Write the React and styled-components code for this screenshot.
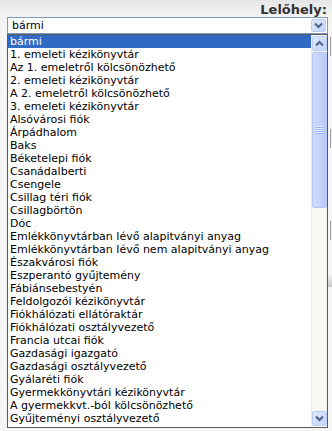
import React from 'react';
import styled, { createGlobalStyle } from 'styled-components';

// Options of the location picker, as they are listed
const LOCATIONS = [
  'bármi',
  '1. emeleti kézikönyvtár',
  'Az 1. emeletről kölcsönözhető',
  '2. emeleti kézikönyvtár',
  'A 2. emeletről kölcsönözhető',
  '3. emeleti kézikönyvtár',
  'Alsóvárosi fiók',
  'Árpádhalom',
  'Baks',
  'Béketelepi fiók',
  'Csanádalberti',
  'Csengele',
  'Csillag téri fiók',
  'Csillagbörtön',
  'Dóc',
  'Emlékkönyvtárban lévő alapitványi anyag',
  'Emlékkönyvtárban lévő nem alapitványi anyag',
  'Északvárosi fiók',
  'Eszperantó gyűjtemény',
  'Fábiánsebestyén',
  'Feldolgozói kézikönyvtár',
  'Fiókhálózati ellátóraktár',
  'Fiókhálózati osztályvezető',
  'Francia utcai fiók',
  'Gazdasági igazgató',
  'Gazdasági osztályvezető',
  'Gyálaréti fiók',
  'Gyermekkönyvtári kézikönyvtár',
  'A gyermekkvt.-ból kölcsönözhető',
  'Gyűjteményi osztályvezető',
];

const GlobalStyle = createGlobalStyle`
  html, body {
    margin: 0;
    padding: 0;
    background: #f6f6f6;
  }
  body {
    font-family: "DejaVu Sans", Verdana, sans-serif;
  }
`;

const Page = styled.div`
  width: 332px;
  height: 431px;
  overflow: hidden;
  display: grid;
  grid-template-columns: 7px 321px 4px;
  grid-template-rows: 17px 17px 394px 3px;
  background: linear-gradient(#e6e6e6 0px, #f3f3f3 16px, #f6f6f6 40px);
`;

const Label = styled.div`
  grid-column: 2 / 4;
  grid-row: 1;
  display: flex;
  justify-content: flex-end;
  align-items: flex-end;
  padding-right: 5px;
  font-size: 13px;
  font-weight: bold;
  color: #333;
  line-height: 15px;
`;

const SelectBox = styled.div`
  grid-column: 2;
  grid-row: 2;
  display: flex;
  align-items: center;
  justify-content: space-between;
  box-sizing: border-box;
  border: 1px solid #7f9db9;
  background: #fff;
  padding: 0 1px 0 4px;
  font-size: 11px;
  color: #000;
`;

const ArrowButton = styled.div`
  width: 15px;
  height: ${(p) => (p.$tall ? 15 : 13)}px;
  box-sizing: border-box;
  border: 1px solid #bccdf5;
  border-radius: 2px;
  background: linear-gradient(135deg, #dfe8fd, #c1d2fb);
  display: flex;
  align-items: center;
  justify-content: center;
  flex-shrink: 0;
`;

const ListBox = styled.div`
  grid-column: 2;
  grid-row: 3;
  display: flex;
  box-sizing: border-box;
  border: 1px solid #5a5a5a;
  background: #fff;
  overflow: hidden;
`;

const Options = styled.ul`
  flex: 1;
  list-style: none;
  margin: 0;
  padding: 0;
  overflow: hidden;
`;

const Option = styled.li`
  height: 13px;
  line-height: 13px;
  padding-left: 2px;
  font-size: 11px;
  white-space: nowrap;
  color: ${(p) => (p.$selected ? '#fff' : '#000')};
  background: ${(p) => (p.$selected ? '#316ac5' : 'transparent')};
`;

const Scrollbar = styled.div`
  width: 15px;
  display: flex;
  flex-direction: column;
  gap: 1px;
  padding: 1px 0;
  background: #f7f7f3;
  border-left: 1px solid #eeede5;
`;

const Track = styled.div`
  flex: 1;
  display: flex;
  flex-direction: column;
`;

const Thumb = styled.div`
  height: 156px;
  box-sizing: border-box;
  border: 1px solid #b4c8f6;
  border-radius: 2px;
  background: linear-gradient(90deg, #cddbfc, #c3d4fc 50%, #b9cbf7);
  display: flex;
  align-items: center;
  justify-content: center;
`;

const Side = styled.div`
  grid-column: 3;
  grid-row: 2 / 5;
  display: flex;
  flex-direction: column;
`;

const Fragment = styled.div`
  height: ${(p) => p.$h}px;
  margin-top: ${(p) => p.$top}px;
  margin-left: 2px;
  border-left: 1px solid #9a9a9a;
  border-top: 1px solid #c8c8c8;
`;

const Band = styled.div`
  height: 12px;
  margin-top: ${(p) => p.$top}px;
  background: linear-gradient(#f0f0f0, #c9c9c9);
`;

const Chevron = ({ up }) => (
  <svg width="9" height="7" viewBox="0 0 9 7">
    <path
      d={up ? 'M1 5.5 L4.5 2 L8 5.5' : 'M1 1.5 L4.5 5 L8 1.5'}
      fill="none"
      stroke="#4d6185"
      strokeWidth="2"
    />
  </svg>
);

const Gripper = () => (
  <svg width="7" height="8" viewBox="0 0 7 8">
    {[0, 2, 4, 6].map((y) => (
      <line key={y} x1="0" y1={y + 0.5} x2="7" y2={y + 0.5} stroke="#eef3fe" />
    ))}
    {[1, 3, 5, 7].map((y) => (
      <line key={y} x1="0" y1={y + 0.5} x2="7" y2={y + 0.5} stroke="#8cb0f8" />
    ))}
  </svg>
);

const App = () => (
  <Page>
    <GlobalStyle />
    <Label>Lelőhely:</Label>
    <SelectBox>
      <span>bármi</span>
      <ArrowButton>
        <Chevron />
      </ArrowButton>
    </SelectBox>
    <ListBox>
      <Options>
        {LOCATIONS.map((name, i) => (
          <Option key={name} $selected={i === 0}>
            {name}
          </Option>
        ))}
      </Options>
      <Scrollbar>
        <ArrowButton $tall>
          <Chevron up />
        </ArrowButton>
        <Track>
          <Thumb>
            <Gripper />
          </Thumb>
        </Track>
        <ArrowButton $tall>
          <Chevron />
        </ArrowButton>
      </Scrollbar>
    </ListBox>
    <Side>
      <Fragment $top={20} $h={18} />
      <Fragment $top={73} $h={18} />
      <Fragment $top={73} $h={18} />
      <Band $top={35} />
    </Side>
  </Page>
);

export default App;
